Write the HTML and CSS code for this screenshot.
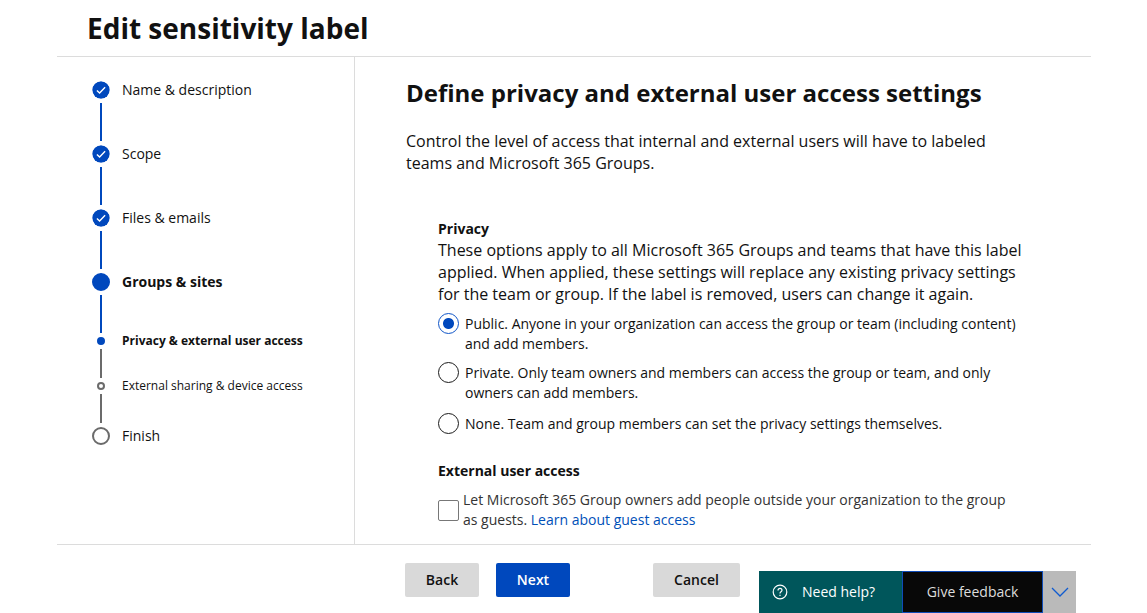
FILE: index.html
```html
<!DOCTYPE html>
<html lang="en">
<head>
<meta charset="utf-8">
<title>Edit sensitivity label</title>
<link rel="stylesheet" href="styles.css">
</head>
<body>
<div class="page">
  <header class="page-header"><h1 class="page-title">Edit sensitivity label</h1></header>
  <div class="wizard">
    <nav class="sidebar" aria-label="Steps">
      <ol class="steps">
        <li class="step done">
          <svg class="marker" viewBox="0 0 18 18" aria-hidden="true"><circle cx="9" cy="9" r="8.7"/><path d="M4.9 9.4l2.7 2.6 5.5-5.7"/></svg>
          <span class="step-name">Name &amp; description</span>
        </li>
        <li class="step done">
          <svg class="marker" viewBox="0 0 18 18" aria-hidden="true"><circle cx="9" cy="9" r="8.7"/><path d="M4.9 9.4l2.7 2.6 5.5-5.7"/></svg>
          <span class="step-name">Scope</span>
        </li>
        <li class="step done">
          <svg class="marker" viewBox="0 0 18 18" aria-hidden="true"><circle cx="9" cy="9" r="8.7"/><path d="M4.9 9.4l2.7 2.6 5.5-5.7"/></svg>
          <span class="step-name">Files &amp; emails</span>
        </li>
        <li class="step current">
          <span class="marker"></span>
          <span class="step-name">Groups &amp; sites</span>
        </li>
        <li class="step sub current" aria-current="step">
          <span class="marker"></span>
          <span class="step-name">Privacy &amp; external user access</span>
        </li>
        <li class="step sub">
          <span class="marker"></span>
          <span class="step-name">External sharing &amp; device access</span>
        </li>
        <li class="step last">
          <span class="marker"></span>
          <span class="step-name">Finish</span>
        </li>
      </ol>
    </nav>
    <main class="content">
      <h2 class="content-title">Define privacy and external user access settings</h2>
      <p class="intro">Control the level of access that internal and external users will have to labeled teams and Microsoft 365 Groups.</p>
      <section class="settings">
        <h3 class="section-title" id="privacy">Privacy</h3>
        <p class="section-text">These options apply to all Microsoft 365 Groups and teams that have this label applied. When applied, these settings will replace any existing privacy settings for the team or group. If the label is removed, users can change it again.</p>
        <div class="options" role="radiogroup" aria-labelledby="privacy">
          <label class="option"><input class="radio" type="radio" name="privacy" checked><span class="option-text">Public. Anyone in your organization can access the group or team (including content) and add members.</span></label>
          <label class="option"><input class="radio" type="radio" name="privacy"><span class="option-text">Private. Only team owners and members can access the group or team, and only owners can add members.</span></label>
          <label class="option"><input class="radio" type="radio" name="privacy"><span class="option-text">None. Team and group members can set the privacy settings themselves.</span></label>
        </div>
        <h3 class="section-title">External user access</h3>
        <div class="guest">
          <input class="checkbox" type="checkbox" id="guests">
          <label class="guest-text" for="guests">Let Microsoft 365 Group owners add people outside your organization to the group as guests. <a class="link" href="#">Learn about guest access</a></label>
        </div>
      </section>
    </main>
  </div>
  <footer class="actions">
    <button class="btn" type="button">Back</button>
    <button class="btn primary" type="button">Next</button>
    <button class="btn cancel" type="button">Cancel</button>
  </footer>
</div>
<div class="dock">
  <button class="help" type="button">
    <svg class="help-icon" viewBox="0 0 16 16" aria-hidden="true"><circle cx="8" cy="8" r="6.8"/><path d="M6 6.500c0-1.300.9-2.100 2-2.100s2 .8 2 1.900c0 1.500-2 1.500-2 3.100M8 10.800v1.200"/></svg>
    Need help?
  </button>
  <button class="feedback" type="button">Give feedback</button>
  <button class="collapse" type="button" aria-label="Collapse">
    <svg class="chevron" viewBox="0 0 18 10" aria-hidden="true"><path d="M1 1l8 8 8-8"/></svg>
  </button>
</div>
</body>
</html>
```
FILE: styles.css
```css
* { box-sizing: border-box; }
body {
  margin: 0;
  background: #fff;
  color: #111;
  font-family: "Segoe UI", "Open Sans", "Noto Sans", sans-serif;
  font-size: 14px;
  line-height: 20px;
}
h1, h2, h3, p, ol { margin: 0; padding: 0; }
button, input { font: inherit; margin: 0; }

.page { margin: 0 56px 0 57px; }
.page-header { padding: 10px 30px; border-bottom: 1px solid #dcdcdc; }
.page-title { font-size: 28px; line-height: 36px; font-weight: 700; }

.wizard { display: flex; border-bottom: 1px solid #dcdcdc; }
.sidebar {
  flex: 0 0 298px;
  padding: 24px 20px 24px 35px;
  border-right: 1px solid #dcdcdc;
}
.steps { list-style: none; }
.step {
  display: grid;
  grid-template-columns: 18px 1fr;
  grid-template-rows: 18px 38px;
  gap: 4px 12px;
  padding-bottom: 4px;
  line-height: 18px;
  align-items: center;
  justify-items: center;
}
.step::after { content: ""; width: 2px; height: 100%; background: #0048bd; }
.step-name { justify-self: start; white-space: nowrap; }
.marker { width: 18px; height: 18px; border: 2px solid #6b6b6b; border-radius: 50%; }
.done .marker { border: 0; fill: #0048bd; }
.marker path { fill: none; stroke: #fff; stroke-width: 1.4; }
.current .marker { border-color: #0048bd; background: #0048bd; }
.current .step-name { font-weight: 700; }
.sub { grid-template-rows: 8px 29px; font-size: 12px; line-height: 8px; }
.sub .marker { width: 8px; height: 8px; }
.sub::after { background: #6b6b6b; }
.last { grid-template-rows: 18px; padding: 0; }
.last::after { display: none; }

.content { flex: 1; padding: 20px 40px 14px 51px; }
.content-title { font-size: 24px; line-height: 32px; font-weight: 700; }
.intro { max-width: 600px; margin-top: 21px; font-size: 16px; line-height: 22px; }
.settings { max-width: 632px; margin-top: 45px; padding-left: 32px; }
.section-title { font-size: 14px; line-height: 20px; font-weight: 700; }
.section-text { font-size: 16px; line-height: 22px; }
.options { display: grid; gap: 8px; margin: 8px 0 27px; }
.option { display: flex; gap: 6px; }
.option:last-child { margin-top: 2px; }
.option-text { padding-top: 1px; }
.radio, .checkbox {
  appearance: none;
  flex: none;
  width: 21px;
  height: 21px;
  border: 1px solid #1b1b1b;
  background: #fff;
}
.radio { border-radius: 50%; }
.radio:checked { border-color: #0f55c8; background: radial-gradient(circle, #0048bd 5px, #fff 6px); }
.checkbox { border-color: #777; border-radius: 2px; }
.guest { display: flex; align-items: center; gap: 4px; margin-top: 9px; color: #333; }
.guest-text { max-width: 554px; }
.link { color: #0050b8; text-decoration: none; }

.actions { display: flex; gap: 17px; padding: 18px 0 16px 348px; }
.btn {
  width: 74px;
  height: 34px;
  padding: 0;
  border: 0;
  border-radius: 2px;
  background: #d9d9d9;
  color: #111;
  font-weight: 600;
}
.primary { background: #0048bd; color: #fff; }
.cancel { width: 87px; margin-left: 66px; }

.dock { position: fixed; right: 71px; bottom: 0; display: flex; height: 42px; }
.dock button { display: flex; align-items: center; justify-content: center; border: 0; padding: 0; }
.dock .help { width: 143px; gap: 14px; padding-left: 13px; justify-content: flex-start; background: #00565b; color: #fff; }
.help-icon { width: 16px; height: 16px; fill: none; stroke: #fff; stroke-width: 1.2; }
.dock .feedback { width: 141px; border: 1px solid #0f4cb8; background: #080808; color: #ddd; }
.dock .collapse { width: 33px; background: #bababa; }
.chevron { width: 18px; height: 10px; fill: none; stroke: #0f5bd0; stroke-width: 1.3; }
```
